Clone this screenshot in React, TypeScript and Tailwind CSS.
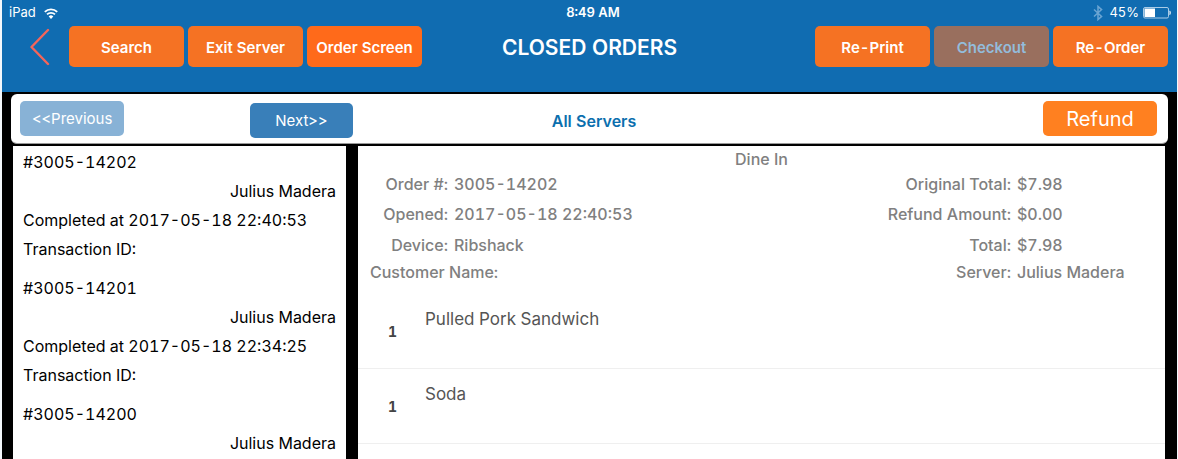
import type { ReactNode } from "react";

const orders = [
  { id: "#3005-14202", server: "Julius Madera", completed: "2017-05-18 22:40:53", transaction: "" },
  { id: "#3005-14201", server: "Julius Madera", completed: "2017-05-18 22:34:25", transaction: "" },
  { id: "#3005-14200", server: "Julius Madera" },
];

const items = [
  { qty: 1, name: "Pulled Pork Sandwich" },
  { qty: 1, name: "Soda" },
];

function WifiIcon() {
  return (
    <svg width="14" height="11" viewBox="0 0 14 11" fill="none" stroke="white" aria-hidden="true">
      <path d="M0.8 3.9a9 9 0 0 1 12.4 0" strokeWidth="1.9" />
      <path d="M3 6.4a5.8 5.8 0 0 1 8 0" strokeWidth="1.8" />
      <path d="M7 10.9 4.7 8.5a3.2 3.2 0 0 1 4.6 0Z" fill="white" stroke="none" />
    </svg>
  );
}

function BluetoothIcon() {
  return (
    <svg width="10" height="16" viewBox="0 0 10 16" fill="none" stroke="#6ba5d3" strokeWidth="1.5" aria-hidden="true">
      <path d="M1 4.5 8.6 11.4 5 14.6V1.4l3.6 3.2L1 11.5" />
    </svg>
  );
}

function BatteryIcon() {
  return (
    <svg width="28" height="12" viewBox="0 0 28 12" aria-hidden="true">
      <rect x="0.5" y="0.5" width="25" height="10.5" rx="1.5" fill="none" stroke="#a9cbe6" />
      <rect x="1.5" y="1.5" width="10.5" height="8.5" fill="white" />
      <path d="M26.8 3.8q1.4 2 0 4Z" fill="white" stroke="white" strokeWidth="0.5" />
    </svg>
  );
}

function HeaderButton({ children, disabled = false, active = false }: { children: ReactNode; disabled?: boolean; active?: boolean }) {
  const tone = disabled
    ? "bg-[#996f5e] text-[#93bcdb]"
    : active
      ? "bg-[#ff6a1a] text-white"
      : "bg-[#f57223] text-white";
  return (
    <button type="button" disabled={disabled} className={`h-[41px] w-[115px] whitespace-nowrap rounded-[5px] pt-1 text-[15px] font-semibold ${tone}`}>
      {children}
    </button>
  );
}

function Detail({ label, value }: { label: string; value: string }) {
  return (
    <div className="col-span-2 grid grid-cols-subgrid items-center">
      <dt className="text-right">{label}</dt>
      <dd>{value}</dd>
    </div>
  );
}

export default function App() {
  return (
    <div className="flex min-h-screen flex-col border-l-2 border-r border-[#f4f8fc] bg-black font-['Inter',sans-serif] tabular-nums">
      <header className="h-[92px] bg-[#106cb1] text-white">
        <div className="grid h-[26px] grid-cols-[1fr_auto_1fr] items-center pl-[7px] text-[13px]">
          <div className="flex items-center gap-2">
            <span>iPad</span>
            <WifiIcon />
          </div>
          <span className="text-center font-semibold">8:49 AM</span>
          <div className="flex items-center justify-end pr-1.5">
            <BluetoothIcon />
            <span className="ml-1.5 mr-1">45%</span>
            <BatteryIcon />
          </div>
        </div>
        <div className="grid grid-cols-[1fr_auto_1fr] items-center px-[9px]">
          <div className="flex items-center gap-1 pl-[19px]">
            <button type="button" aria-label="Back" className="mr-[15px]">
              <svg width="20" height="38" viewBox="0 0 20 38" fill="none" stroke="#f4655a" strokeWidth="2.4" strokeLinecap="round" strokeLinejoin="round" aria-hidden="true">
                <path d="M18 2 1.5 19 18 36" />
              </svg>
            </button>
            <HeaderButton>Search</HeaderButton>
            <HeaderButton>Exit Server</HeaderButton>
            <HeaderButton active>Order Screen</HeaderButton>
          </div>
          <h1 className="pt-0.5 text-[21px] font-semibold">CLOSED ORDERS</h1>
          <div className="flex justify-end gap-1">
            <HeaderButton>Re-Print</HeaderButton>
            <HeaderButton disabled>Checkout</HeaderButton>
            <HeaderButton>Re-Order</HeaderButton>
          </div>
        </div>
      </header>

      <nav className="mx-[9px] mt-0.5 grid h-[50px] grid-cols-[1fr_auto_1fr] items-start rounded-md border-b border-[#999] bg-white pl-[9px] pt-[7px]" aria-label="Order pages">
        <div className="flex items-end gap-[126px]">
          <button type="button" disabled className="mb-0.5 h-[35px] w-[104px] rounded-[5px] bg-[#88b2d6] pt-0.5 text-[15px] text-white">
            &lt;&lt;Previous
          </button>
          <button type="button" className="h-[35px] w-[103px] rounded-[5px] bg-[#397fb9] pt-0.5 text-[15px] text-white">
            Next&gt;&gt;
          </button>
        </div>
        <h2 className="text-[16px] font-semibold leading-[40px] text-[#0b6fae]">All Servers</h2>
        <button type="button" className="mr-[11px] h-[35px] w-[114px] justify-self-end rounded-[5px] bg-[#ff8020] text-[20px] text-white">
          Refund
        </button>
      </nav>

      <main className="mr-3 ml-[11px] mt-0.5 flex flex-1 gap-3">
        <ul className="flex w-[333px] shrink-0 flex-col gap-2.5 bg-white px-2.5 pt-0.5 text-[16px] leading-[29px] text-black">
          {orders.map((o) => (
            <li key={o.id}>
              <p>{o.id}</p>
              <p className="text-right">{o.server}</p>
              {o.completed && (
                <p>
                  Completed at <time>{o.completed}</time>
                </p>
              )}
              {o.completed && <p>Transaction ID:{o.transaction}</p>}
            </li>
          ))}
        </ul>

        <section className="min-w-0 flex-1 bg-white pt-[3px] text-[#808080]">
          <h3 className="text-center text-[16px] font-medium leading-5">Dine In</h3>
          <div className="flex justify-between pl-3 text-[16px] font-medium leading-5">
            <dl className="grid grid-cols-[78px_auto] grid-rows-[29px_32px_30px_24px] gap-x-1.5">
              <Detail label="Order #:" value="3005-14202" />
              <Detail label="Opened:" value="2017-05-18 22:40:53" />
              <Detail label="Device:" value="Ribshack" />
              <div className="col-span-2 flex items-center">
                <dt>Customer Name:</dt>
              </div>
            </dl>
            <dl className="grid grid-cols-[auto_148px] grid-rows-[29px_32px_30px_24px] gap-x-1.5">
              <Detail label="Original Total:" value="$7.98" />
              <Detail label="Refund Amount:" value="$0.00" />
              <Detail label="Total:" value="$7.98" />
              <Detail label="Server:" value="Julius Madera" />
            </dl>
          </div>
          <ul className="mt-2.5">
            {items.map((it) => (
              <li key={it.name} className="flex h-[75px] border-b border-[#efefef] text-[#555]">
                <span className="w-[67px] self-center pl-[30px] text-[14px] font-bold text-[#444]">{it.qty}</span>
                <span className="pt-[13px] text-[17px] leading-6">{it.name}</span>
              </li>
            ))}
          </ul>
        </section>
      </main>
    </div>
  );
}
